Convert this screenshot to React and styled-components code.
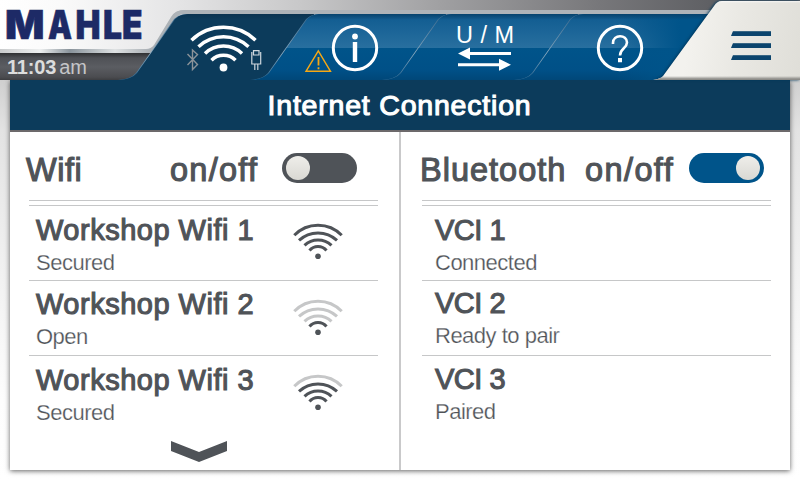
import React from "react";
import styled, { createGlobalStyle, css } from "styled-components";

const navy = "#0c3b5b";
const blue = "#00548a";
const slate = "#4f5358";
const faded = "#c6c7c8";

const Global = createGlobalStyle`
  * { box-sizing: border-box; }
  body { margin: 0; font-family: "Liberation Sans", Arial, sans-serif; }
`;

const Screen = styled.main`
  width: 800px;
  height: 480px;
  overflow: hidden;
  display: flex;
  flex-direction: column;
  background: linear-gradient(#cfcfcf 80px, #e3e3e3 130px, #f0f0f0 260px, #fdfdfd 400px, #fff);
`;

const Header = styled.header`
  height: 80px;
  flex: none;
  display: flex;
  align-items: flex-end;
  position: relative;
  z-index: 1;
  background: linear-gradient(90deg, #fff 0, #fafafa 60px, #e4e4e5 180px, #c8c8c9 300px, #a0a0a2 440px, #77777a 600px, #5f6064 710px);
`;

const BrandBand = styled.div`
  height: 80px;
  width: 200px;
  margin-right: -200px;
  flex: none;
  position: relative;
  background: linear-gradient(90deg, #c9cbcc, #eef0f0 40px, #89939b 70px, #dfe2e3 115px, #a9afb4 150px, #b3b8bc);
  clip-path: path("M0 49H146Q151 49 154 45L171 17Q175 10 184 10H200V14H183Q179 14 175 20L153 53H0Z");
`;

const Brand = styled.div`
  width: 118px;
  height: 80px;
  flex: none;
`;

const LogoPlate = styled.div`
  width: 150px;
  height: 53px;
  svg { display: block; }
`;

const Clock = styled.div`
  width: 175px;
  height: 27px;
  display: flex;
  align-items: baseline;
  padding-left: 7px;
  font-size: 20px;
  line-height: 28px;
  background: linear-gradient(#2f3032, #4f5156 5px, #5b5d62 14px, #4b4c50 24px, #3d3e41);
`;

const Time = styled.span`
  font-weight: 700;
  letter-spacing: -0.15px;
  color: #dcdddd;
`;

const Meridiem = styled.span`
  margin-left: 3px;
  color: #c5c6c8;
  letter-spacing: -0.2px;
`;

const Nav = styled.nav`
  flex: 1;
  height: 70px;
  min-width: 0;
  display: flex;
  border-top: 4px solid #aeb3b8;
  margin-right: -82px;
  clip-path: path("M0 70V66L54 6Q58 0 67 0H700V70Z");
`;

const tabShape = 'path("M0 66Q13 65 18 59L54 8Q59 0 69 0H260V66Z")';

const Tab = styled.button`
  position: relative;
  flex: none;
  width: ${(p) => p.$w || 196}px;
  height: 66px;
  margin-right: ${(p) => (p.$w ? 0 : -64)}px;
  padding: 0 0 0 ${(p) => p.$pad}px;
  border: 0;
  background: none;
  display: flex;
  align-items: flex-start;
  clip-path: ${tabShape};
  &::before,
  &::after {
    content: "";
    position: absolute;
    inset: 0;
    background: linear-gradient(#35668c, #8aa9bf 60%, #2c668f);
  }
  &::after {
    left: 1px;
    clip-path: ${tabShape};
    background: ${(p) =>
      p.$active
        ? css`linear-gradient(#0a3350, ${navy} 6px)`
        : css`linear-gradient(#06426d, transparent 6px), linear-gradient(#0f5b90, #286f9f 34px, ${blue} 34px, #005087 56px, #004778)`};
  }
`;

const HelpTab = styled(Tab)`
  &::after {
    background: linear-gradient(#06426d, transparent 6px), linear-gradient(90deg, transparent 100px, ${blue} 165px),
      linear-gradient(#0f5b90, #286f9f 34px, ${blue} 34px, #005087 56px, #004778);
  }
`;

const TabIcon = styled.span`
  position: relative;
  z-index: 1;
  display: block;
  padding-top: 8px;
  svg { display: block; }
`;

const MenuWrap = styled.div`
  flex: none;
  width: 155px;
  height: 80px;
  position: relative;
  z-index: 2;
  filter: drop-shadow(-1px 0 1.5px #00365a);
`;

const MenuButton = styled.button`
  width: 155px;
  height: 80px;
  border: 0;
  padding: 31px 0 0 86px;
  display: flex;
  flex-direction: column;
  align-items: flex-start;
  gap: 7px;
  clip-path: path("M8 80Q15 79 18 76L69 6Q72 1 77 1H155V80Z");
  background: linear-gradient(#fff 0, #fff0 3px, #fff0 76px, #8d8c88 79px),
    linear-gradient(100deg, #f3f2ee 30%, #e9e8e3 60%, #dfded8);
`;

const MenuBar = styled.i`
  width: 40px;
  height: 5px;
  background: linear-gradient(#4f768f, #0b446d 1.5px);
  clip-path: polygon(2px 0, 100% 0, 100% 100%, 0 100%);
`;

const Card = styled.section`
  width: 780px;
  height: 390px;
  margin: 0 10px;
  flex: none;
  display: flex;
  flex-direction: column;
  background: #fff;
  box-shadow: 0 1px 5px rgba(0, 0, 0, 0.62);
`;

const Title = styled.h1`
  margin: 0;
  height: 52px;
  flex: none;
  border-bottom: 2px solid #6c696b;
  background: ${navy};
  color: #fff;
  font-size: 28.5px;
  font-weight: 400;
  line-height: 50px;
  letter-spacing: 0.8px;
  text-align: center;
  padding-right: 1px;
  -webkit-text-stroke: 1.1px #fff;
`;

const Columns = styled.div`
  flex: 1;
  display: grid;
  grid-template-columns: 391px 1fr;
`;

const Column = styled.section`
  padding: 0 ${(p) => (p.$left ? 21 : 19)}px 0 ${(p) => (p.$left ? 19 : 21)}px;
  border-right: ${(p) => (p.$left ? "2px solid #c9c9ca" : "0")};
`;

const ColumnHead = styled.div`
  height: 74px;
  display: flex;
  align-items: flex-start;
  padding-top: 21px;
  border-bottom: 1px solid ${faded};
  background: linear-gradient(${faded}, ${faded}) 0 68px / 100% 1px no-repeat;
`;

const Heading = styled.h2`
  margin: -2px 0 0 ${(p) => p.$x}px;
  width: ${(p) => p.$w}px;
  color: ${slate};
  font-size: 32.5px;
  font-weight: 400;
  line-height: 38px;
  white-space: nowrap;
  letter-spacing: ${(p) => p.$ls}px;
  -webkit-text-stroke: 1.1px ${slate};
`;

const Switch = styled.button`
  width: 75px;
  height: 30px;
  border: 0;
  border-radius: 15px;
  padding: 3px 4px;
  display: flex;
  justify-content: ${(p) => (p.$on ? "flex-end" : "flex-start")};
  background: ${(p) => (p.$on ? blue : slate)};
`;

const Knob = styled.span`
  width: 24px;
  height: 24px;
  border-radius: 50%;
  background: linear-gradient(#efeeea, #d9d8d3);
`;

const Row = styled.div`
  height: 75px;
  display: flex;
  border-bottom: ${(p) => (p.$last ? "0" : `1px solid ${faded}`)};
  padding: ${(p) => p.$top}px 0 0 ${(p) => p.$inset}px;
`;

const Labels = styled.div`
  width: 257px;
  flex: none;
`;

const Name = styled.div`
  color: ${slate};
  font-size: 29px;
  line-height: 34px;
  white-space: nowrap;
  letter-spacing: ${(p) => p.$ls}px;
  -webkit-text-stroke: 1.1px ${slate};
`;

const Status = styled.div`
  margin-top: 3px;
  color: ${slate};
  font-size: 22px;
  line-height: 26px;
  letter-spacing: -0.5px;
  -webkit-text-stroke: 0.25px #fff;
`;

const SignalIcon = styled.svg`
  margin-top: ${(p) => p.$top}px;
`;

const More = styled.button`
  display: block;
  margin: 10px 0 0 142px;
  width: 56px;
  height: 21px;
  padding: 0;
  border: 0;
  background: ${slate};
  clip-path: polygon(0 0, 50% 11px, 100% 0, 100% 10px, 50% 100%, 0 10px);
`;

const arcs = [
  "M16.5 27.5A11 11 0 0 1 33.5 27.5",
  "M11.5 22.4A19.3 19.3 0 0 1 38.5 22.4",
  "M6 17.4A27.8 27.8 0 0 1 44 17.4",
  "M1.3 12.2A33 33 0 0 1 48.7 12.2",
];

const Signal = ({ level, top }) => (
  <SignalIcon $top={top} width="50" height="37" viewBox="0 0 50 37" fill="none" strokeWidth="3">
    {arcs.map((d, i) => (
      <path key={d} d={d} stroke={i < level ? slate : faded} />
    ))}
    <circle cx="25" cy="33.2" r="2.8" fill={slate} />
  </SignalIcon>
);

const networks = [
  { name: "Workshop Wifi 1", status: "Secured", level: 4, top: 7, icon: 10 },
  { name: "Workshop Wifi 2", status: "Open", level: 1, top: 6, icon: 12 },
  { name: "Workshop Wifi 3", status: "Secured", level: 3, top: 7, icon: 11 },
];

const devices = [
  { name: "VCI 1", status: "Connected", top: 7 },
  { name: "VCI 2", status: "Ready to pair", top: 5 },
  { name: "VCI 3", status: "Paired", top: 6 },
];

const logoLetters = [
  ["M", 5, 39.5],
  ["A", 48, 24],
  ["H", 75.5, 25],
  ["L", 103, 19],
  ["E", 122, 20.5],
];

const Logo = () => (
  <svg width="150" height="53" viewBox="0 0 150 53" fontFamily="Inter, sans-serif" fontWeight="900" fontSize="39.5"
    fill="#1d2a66" stroke="#1d2a66" strokeWidth="0.6">
    <text y="38.7">
      {logoLetters.map(([letter, x, w]) => (
        <tspan key={letter} x={x} textLength={w} lengthAdjust="spacingAndGlyphs">{letter}</tspan>
      ))}
    </text>
  </svg>
);

const ConnectionIcons = () => (
  <svg width="82" height="52" viewBox="184 22 82 52" fill="none">
    <g stroke="#fff" strokeWidth="3.5">
      <path d="M191.5 40.3A45.9 45.9 0 0 1 255.5 40.3" />
      <path d="M198.5 46.8A36.2 36.2 0 0 1 248.5 46.8" />
      <path d="M205 53.4A26.6 26.6 0 0 1 242 53.4" />
      <path d="M211.5 60.2A17 17 0 0 1 235.5 60.2" />
    </g>
    <circle cx="223.5" cy="67.5" r="3.9" fill="#fff" />
    <path d="M187.5 54L197.5 64.5L192.5 69.5V50L197.5 54.5L187.5 65" stroke="#8b9399" strokeWidth="1.4" />
    <path d="M251.8 52V64H260.7V52M253.5 50.6H259V55H253.5ZM254.8 64V70M257.8 64V70" stroke="#cfd8de" strokeWidth="1.2" />
  </svg>
);

const InfoIcons = () => (
  <svg width="75" height="52" viewBox="304 22 75 52" fill="none">
    <path d="M318.3 50.8L330.5 71.3H306Z" stroke="#f5a714" strokeWidth="1.4" />
    <path d="M318.5 57V65.5M318.5 67.3V69.3" stroke="#f5a714" strokeWidth="1.8" />
    <circle cx="355" cy="48" r="21.7" stroke="#fff" strokeWidth="3" />
    <circle cx="355" cy="36.5" r="2.9" fill="#fff" />
    <path d="M355 42V62" stroke="#fff" strokeWidth="4.4" />
  </svg>
);

const UnitsIcon = () => (
  <svg width="60" height="52" viewBox="455 22 60 52" fill="#fff" overflow="visible">
    <text x="456" y="43" fontFamily="Liberation Sans, sans-serif" fontSize="23.5" textLength="58">U / M</text>
    <path d="M458 53.5L470 47.5V52H511V55H470V59.5ZM511 64.7L499 58.7V63.2H458V66.2H499V70.7Z" />
  </svg>
);

const HelpIcon = () => (
  <svg width="48" height="52" viewBox="596 22 48 52" fill="none" stroke="#fff">
    <circle cx="620" cy="48" r="21.7" strokeWidth="3" />
    <path d="M613 44V43C613 34 627 34 627 42.5C627 48.5 620 48 620 55.5" strokeWidth="2.6" />
    <path d="M620 58V62.2" strokeWidth="4" />
  </svg>
);

export default function App() {
  return (
    <Screen>
      <Global />
      <Header>
        <BrandBand />
        <Brand>
          <LogoPlate><Logo /></LogoPlate>
          <Clock><Time>11:03</Time><Meridiem>am</Meridiem></Clock>
        </Brand>
        <Nav>
          <Tab $active $pad={66} aria-label="Connections"><TabIcon><ConnectionIcons /></TabIcon></Tab>
          <Tab $pad={54} aria-label="Information"><TabIcon><InfoIcons /></TabIcon></Tab>
          <Tab $pad={73} aria-label="Units"><TabIcon><UnitsIcon /></TabIcon></Tab>
          <HelpTab $w={210} $pad={82} aria-label="Help"><TabIcon><HelpIcon /></TabIcon></HelpTab>
        </Nav>
        <MenuWrap>
          <MenuButton aria-label="Menu"><MenuBar /><MenuBar /><MenuBar /></MenuButton>
        </MenuWrap>
      </Header>
      <Card>
        <Title>Internet Connection</Title>
        <Columns>
          <Column $left>
            <ColumnHead>
              <Heading $x={-3} $w={144} $ls={0.5}>Wifi</Heading>
              <Heading $x={0} $w={112} $ls={1.25}>on/off</Heading>
              <Switch role="switch" aria-checked="false"><Knob /></Switch>
            </ColumnHead>
            {networks.map((n, i) => (
              <Row key={n.name} $top={n.top} $inset={7} $last={i === 2}>
                <Labels><Name $ls={0.5}>{n.name}</Name><Status>{n.status}</Status></Labels>
                <Signal level={n.level} top={n.icon} />
              </Row>
            ))}
            <More aria-label="More networks" />
          </Column>
          <Column>
            <ColumnHead>
              <Heading $x={-2} $w={165} $ls={1}>Bluetooth</Heading>
              <Heading $x={0} $w={104} $ls={1.4}>on/off</Heading>
              <Switch $on role="switch" aria-checked="true"><Knob /></Switch>
            </ColumnHead>
            {devices.map((d, i) => (
              <Row key={d.name} $top={d.top} $inset={13} $last={i === 2}>
                <Labels><Name $ls={-0.5}>{d.name}</Name><Status>{d.status}</Status></Labels>
              </Row>
            ))}
          </Column>
        </Columns>
      </Card>
    </Screen>
  );
}
